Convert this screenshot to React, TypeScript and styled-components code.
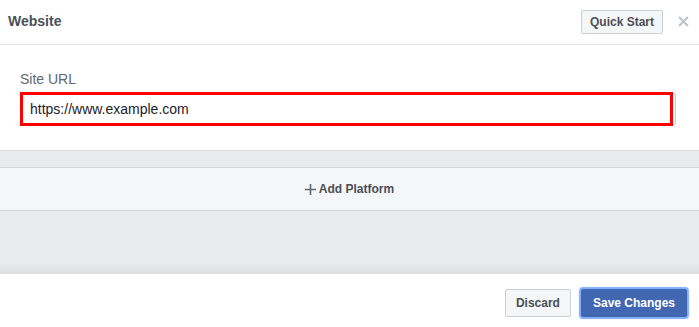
import React from "react";
import styled, { createGlobalStyle } from "styled-components";

const Global = createGlobalStyle`
  html, body { margin: 0; padding: 0; background: #fff; }
  body { font-family: "Liberation Sans", Arial, Helvetica, sans-serif; }
  * { box-sizing: border-box; }
`;

const Dialog = styled.div`
  width: 699px;
  height: 327px;
  display: flex;
  flex-direction: column;
  background: #fff;
  overflow: hidden;
`;

const Header = styled.div`
  height: 45px;
  flex: none;
  display: flex;
  align-items: center;
  padding: 0 10px 0 8px;
  border-bottom: 1px solid #e5e5e5;
`;

const Title = styled.div`
  flex: 1;
  font-size: 14px;
  font-weight: bold;
  color: #4b4f56;
  margin-top: -3px;
`;

const Button = styled.button<{ $primary?: boolean }>`
  font-family: "Liberation Sans", Arial, sans-serif;
  font-size: 12px;
  font-weight: bold;
  height: 28px;
  padding: 0 ${(p) => (p.$primary ? "11px" : "10px")};
  border-radius: 2px;
  border: 1px solid ${(p) => (p.$primary ? "#4267b2" : "#ccd0d5")};
  background: ${(p) => (p.$primary ? "#4267b2" : "#f5f6f7")};
  color: ${(p) => (p.$primary ? "#fff" : "#4b4f56")};
  box-shadow: ${(p) => (p.$primary ? "0 0 1px 2px rgba(88,144,255,.75)" : "none")};
  cursor: pointer;
`;

const SmallButton = styled(Button)`
  height: 24px;
  padding: 0 8px;
  margin-top: -1px;
`;

const Close = styled.span`
  width: 11px;
  height: 11px;
  margin-left: 15px;
  margin-top: -1px;
  display: flex;
`;

const Body = styled.div`
  flex: none;
  height: 106px;
  padding: 26px 23px 0 20px;
  border-bottom: 1px solid #dddfe2;
`;

const Label = styled.div`
  font-size: 14px;
  color: #606770;
  line-height: 16px;
  margin-bottom: 6px;
`;

const Field = styled.div`
  position: relative;
`;

const Input = styled.input`
  display: block;
  width: 100%;
  height: 32px;
  border: 1px solid #ccd0d5;
  border-radius: 2px;
  padding: 0 9px;
  font-family: "Liberation Sans", Arial, sans-serif;
  font-size: 14px;
  color: #1d2129;
  outline: none;
`;

const Highlight = styled.div`
  position: absolute;
  left: 0;
  top: -1px;
  right: 3px;
  bottom: -1px;
  border: 3px solid #ff0000;
  pointer-events: none;
`;

const Platforms = styled.div`
  flex: none;
  height: 123px;
  background: #e9ebee;
  padding-top: 16px;
  position: relative;
  &::after {
    content: "";
    position: absolute;
    left: 0;
    right: 0;
    bottom: 0;
    height: 12px;
    background: linear-gradient(to bottom, rgba(0,0,0,0), rgba(0,0,0,0.06));
  }
`;

const AddBar = styled.div`
  height: 44px;
  background: #f5f6f7;
  border-top: 1px solid #d3d6db;
  border-bottom: 1px solid #d3d6db;
  display: flex;
  align-items: center;
  justify-content: center;
  gap: 3px;
  font-size: 12px;
  font-weight: bold;
  color: #4b4f56;
`;

const Footer = styled.div`
  flex: 1;
  display: flex;
  justify-content: flex-end;
  align-items: flex-start;
  gap: 10px;
  padding: 15px 12px 0 0;
`;

export default function App() {
  return (
    <>
      <Global />
      <Dialog>
        <Header>
          <Title>Website</Title>
          <SmallButton>Quick Start</SmallButton>
          <Close>
            <svg width="11" height="11" viewBox="0 0 11 11">
              <path d="M1 1L10 10M10 1L1 10" stroke="#bec2c9" strokeWidth="2" />
            </svg>
          </Close>
        </Header>
        <Body>
          <Label>Site URL</Label>
          <Field>
            <Input defaultValue="https://www.example.com" />
            <Highlight />
          </Field>
        </Body>
        <Platforms>
          <AddBar>
            <svg width="11" height="11" viewBox="0 0 11 11">
              <path d="M5.5 0V11M0 5.5H11" stroke="#606770" strokeWidth="1.6" />
            </svg>
            Add Platform
          </AddBar>
        </Platforms>
        <Footer>
          <Button>Discard</Button>
          <Button $primary>Save Changes</Button>
        </Footer>
      </Dialog>
    </>
  );
}
